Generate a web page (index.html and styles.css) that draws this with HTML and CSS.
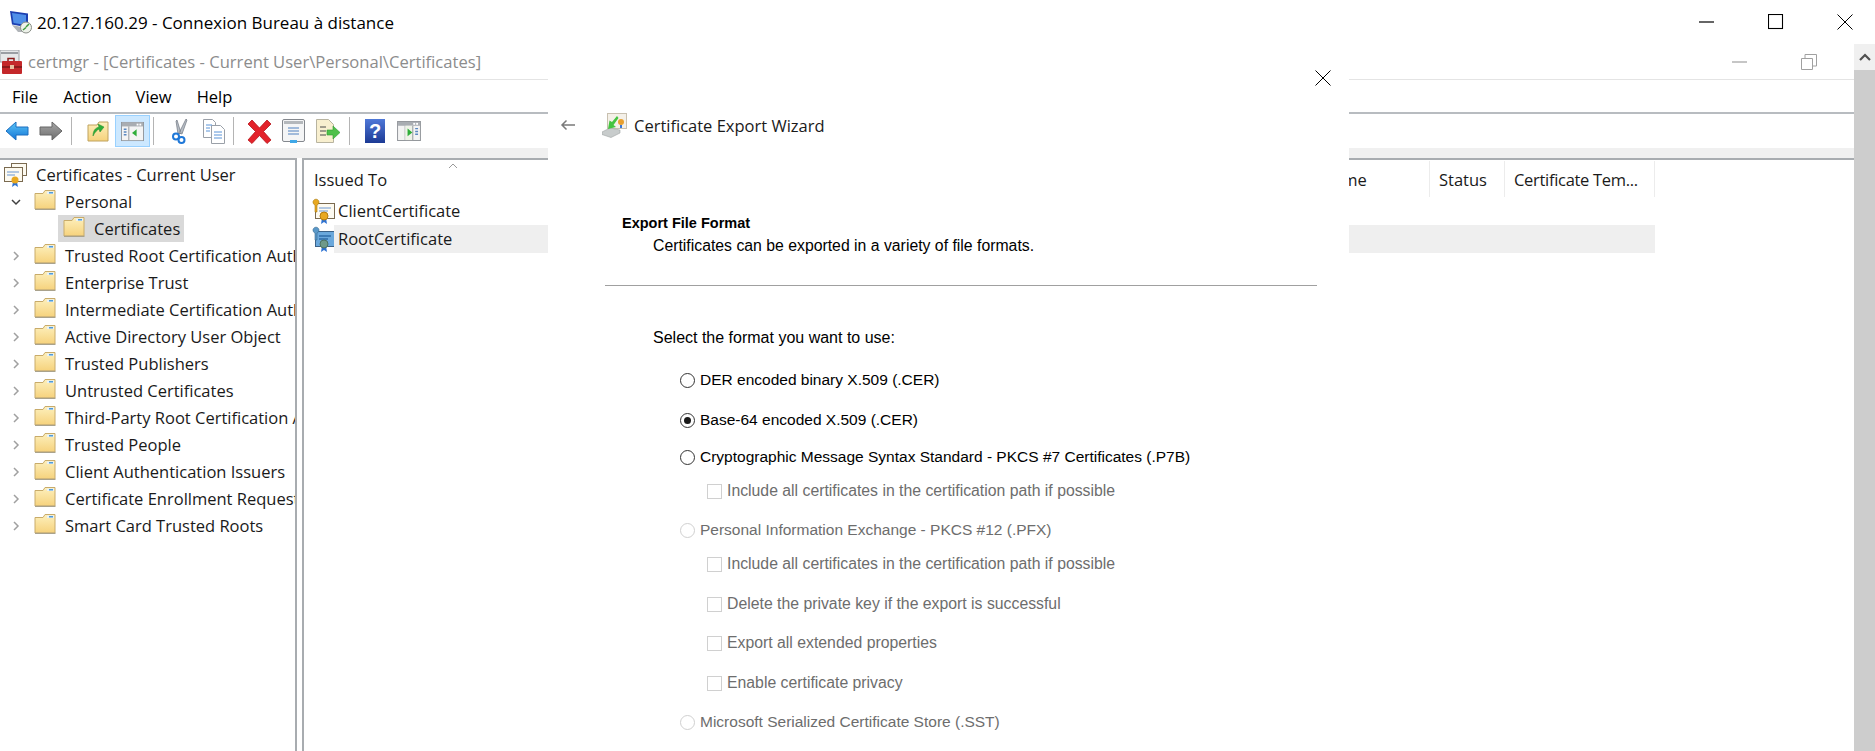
FILE: index.html
```html
<!DOCTYPE html>
<html lang="en">
<head>
    <meta charset="UTF-8">
    <meta name="viewport" content="width=device-width, initial-scale=1.0">
    <title>Connexion Bureau à distance</title>
    <link rel="stylesheet" href="styles.css">
</head>
<body>
    <!-- shared icons -->
    <svg class="defs" width="0" height="0">
        <defs>
            <linearGradient id="gFolder" x1="0" y1="0" x2="0" y2="1">
                <stop offset="0" stop-color="#fdf0bd"/>
                <stop offset="1" stop-color="#f6d27c"/>
            </linearGradient>
            <linearGradient id="gBlue" x1="0" y1="0" x2="0" y2="1">
                <stop offset="0" stop-color="#5cc6f7"/>
                <stop offset="1" stop-color="#1273d6"/>
            </linearGradient>
            <linearGradient id="gGray" x1="0" y1="0" x2="0" y2="1">
                <stop offset="0" stop-color="#a6a6a6"/>
                <stop offset="1" stop-color="#6e6e6e"/>
            </linearGradient>
            <linearGradient id="gHelp" x1="0" y1="0" x2="0" y2="1">
                <stop offset="0" stop-color="#4f78d8"/>
                <stop offset="1" stop-color="#1c3a94"/>
            </linearGradient>
        </defs>
        <symbol id="folder" viewBox="0 0 22 21">
            <path d="M1 4.500h8l2-3h10v18.500H1z" fill="url(#gFolder)" stroke="#c8ab6a"/>
            <path d="M1 20.500h20.500" stroke="#a9a28c" stroke-width="1.500"/>
            <path d="M13 2.500h7v2.500h-7z" fill="#e8f1f8"/>
            <path d="M15 3h4v1.500h-4z" fill="#4f9bd8"/>
        </symbol>
        <symbol id="pane" viewBox="0 0 25 21">
            <rect x=".5" y=".5" width="24" height="20" fill="#f4f4f4" stroke="#8f9398"/>
            <rect x="1" y="1" width="23" height="4" fill="#a9adb2"/>
            <rect x="17" y="2" width="2" height="2" fill="#fff"/>
            <rect x="20" y="2" width="2" height="2" fill="#fff"/>
            <path d="M8.500 5v15" stroke="#8f9398"/>
        </symbol>
        <symbol id="cert" viewBox="0 0 24 27">
            <rect x="4.500" y="5.500" width="19" height="15" fill="#fdfaf0" stroke="#7a6a50"/>
            <path d="M8 10h12M8 13h9" stroke="#9bb8dc" stroke-width="1.500"/>
            <path d="M11 20l-1 6 3-2 3 2-1-6z" fill="#2d72d2"/>
            <circle cx="13" cy="18" r="4" fill="#e8a820" stroke="#b57d10"/>
        </symbol>
        <symbol id="chev-right" viewBox="0 0 10 10">
            <path d="M3 1l4 4-4 4" fill="none" stroke="#a0a0a0" stroke-width="1.500"/>
        </symbol>
    </svg>

    <header class="rdp-bar">
        <svg class="rdp-icon" viewBox="0 0 24 24" width="24" height="24">
            <path d="M1 1l18 2.500v14L3 14.500z" fill="#1c3fb0"/>
            <path d="M3 3l14 2v10L4.500 13z" fill="#4f8fe8"/>
            <path d="M3 15l6 7h5l1-4.500z" fill="#b0b4b8"/>
            <circle cx="17" cy="17.500" r="5.500" fill="#eef2ea" stroke="#8a8f88"/>
            <path d="M14 20l3-2.500M17 17l3-3" stroke="#3c9a3c" stroke-width="1.500"/>
        </svg>
        <span class="rdp-title">20.127.160.29 - Connexion Bureau à distance</span>
        <div class="win-controls">
            <svg width="16" height="16" viewBox="0 0 16 16"><path d="M0 8h15" stroke="#000" stroke-width="1.200"/></svg>
            <svg width="16" height="16" viewBox="0 0 16 16"><rect x=".5" y=".5" width="14" height="14" fill="none" stroke="#000" stroke-width="1.100"/></svg>
            <svg width="16" height="16" viewBox="0 0 16 16"><path d="M.5.5l15 15M15.500.5l-15 15" stroke="#000"/></svg>
        </div>
    </header>

    <div class="desktop">
        <div class="mmc">
            <div class="mmc-title">
                <svg class="mmc-icon" viewBox="0 0 24 24" width="24" height="24">
                    <rect x="0" y="0" width="19" height="12" fill="#e6e8ea" stroke="#9a9ea4"/>
                    <path d="M1 3h17" stroke="#9a9ea4" stroke-width="2"/>
                    <path d="M8 11V8.500h6V11" fill="none" stroke="#8a1c1c" stroke-width="1.500"/>
                    <rect x="2" y="11" width="20" height="13" rx="1" fill="#c4282a"/>
                    <rect x="2" y="16" width="20" height="2" fill="#8a1c1c"/>
                    <rect x="10" y="15" width="4" height="4" fill="#e8c0a0"/>
                </svg>
                <span class="mmc-name">certmgr - [Certificates - Current User\Personal\Certificates]</span>
                <div class="mmc-controls">
                    <svg width="16" height="16" viewBox="0 0 16 16"><path d="M0 8h15" stroke="#a0a0a0" stroke-width="1.200"/></svg>
                    <svg width="16" height="16" viewBox="0 0 16 16"><path d="M.5 4.500h11v11H.5z" fill="none" stroke="#a0a0a0"/><path d="M4 4V.5h11.500V12H12" fill="none" stroke="#a0a0a0"/></svg>
                </div>
            </div>

            <nav class="menu">
                <span class="menu-file">File</span>
                <span class="menu-action">Action</span>
                <span class="menu-view">View</span>
                <span>Help</span>
            </nav>

            <div class="toolbar">
                <span class="tool w34"><svg width="24" height="20" viewBox="0 0 24 20"><path d="M1 10L11 1v5h12v8H11v5z" fill="url(#gBlue)" stroke="#1c6fc0"/></svg></span>
                <span class="tool w34"><svg width="24" height="20" viewBox="0 0 24 20"><path d="M23 10L13 1v5H1v8h12v5z" fill="url(#gGray)" stroke="#666"/></svg></span>
                <span class="sep"></span>
                <span class="tool w35"><svg width="22" height="22" viewBox="0 0 22 22"><path d="M1 5h9l2-3h9v19H1z" fill="url(#gFolder)" stroke="#bfa25f"/><path d="M6 16c0-5 2-8 6-9l-1-3 6 3-4 5-1-3c-2 1-4 3-6 7z" fill="#2fae3a" stroke="#1c8a28" stroke-width=".5"/></svg></span>
                <span class="tool w35 is-active"><svg width="23" height="21" viewBox="0 0 25 21"><use href="#pane"/><path d="M3 8h3M3 11h3M3 14h3" stroke="#5a88c0" stroke-width="1.500"/><path d="M17 8v8l-5-4z" fill="#2fae3a"/></svg></span>
                <span class="sep"></span>
                <span class="tool w35"><svg width="18" height="26" viewBox="0 0 18 26"><path d="M8 15L15 1l1 1-5 14zM10 15L6 2 5 3l2 13z" fill="#b8bec6" stroke="#6f7680" stroke-width=".7"/><circle cx="5" cy="18.500" r="3" fill="none" stroke="#1f78d8" stroke-width="2"/><circle cx="10.500" cy="22" r="3" fill="none" stroke="#1f78d8" stroke-width="2"/></svg></span>
                <span class="tool w33"><svg width="24" height="25" viewBox="0 0 24 25"><path d="M1.500.5h9l3 3v15h-12z" fill="#fff" stroke="#9aa0a8"/><path d="M9.500 6.500h9l4 4v14h-13z" fill="#fff" stroke="#9aa0a8"/><path d="M4 6h6M4 9h4M4 12h4M12 13h8M12 16h8M12 19h8" stroke="#5a94d8"/></svg></span>
                <span class="sep"></span>
                <span class="tool w34"><svg width="25" height="25" viewBox="0 0 25 25"><path d="M5 1l7.500 8L20 1l4 4-7.500 7.500L24 21l-4 3.500-7.500-8-7.500 8L1 21l7.500-8.500L1 5z" fill="#e3222a" stroke="#b6151c" stroke-width=".8"/></svg></span>
                <span class="tool w34"><svg width="23" height="24" viewBox="0 0 23 24"><rect x=".5" y=".5" width="22" height="22" rx="1.500" fill="#f4f5f6" stroke="#84888e"/><rect x="2" y="2" width="19" height="3" fill="#b4b8bc"/><path d="M6 9h11M6 12h11M6 15h11" stroke="#4f80c0"/><rect x="8" y="21" width="7" height="3" fill="#3fa8e8"/></svg></span>
                <span class="tool w36"><svg width="25" height="25" viewBox="0 0 25 25"><path d="M.5.5h12l5 5v18H.5z" fill="#f8efcf" stroke="#b8b4a0"/><path d="M4 8h6M4 12h6M4 16h6" stroke="#4a4a4a"/><path d="M11 11h6V7l7 6.500-7 6.500v-4h-6z" fill="#4fc04a" stroke="#2e9a30" stroke-width=".6"/></svg></span>
                <span class="sep"></span>
                <span class="tool w33"><svg width="20" height="24" viewBox="0 0 20 24"><rect width="20" height="24" fill="url(#gHelp)"/><text class="help-mark" x="10" y="19" text-anchor="middle">?</text></svg></span>
                <span class="tool w36"><svg width="24" height="20" viewBox="0 0 25 21"><use href="#pane"/><path d="M8.500 5h8v15h-8z" fill="#eef3e8"/><path d="M16.500 5v15" stroke="#8f9398"/><path d="M19 8h3M19 11h3M19 14h3" stroke="#5a88c0" stroke-width="1.500"/><path d="M11 8v8l5-4z" fill="#2fae3a"/></svg></span>
            </div>

            <div class="status-strip"></div>

            <div class="panes">
                <aside class="tree">
                    <div class="tree-row tree-root">
                        <svg class="tree-root-icon" width="24" height="24" viewBox="0 0 24 24"><rect x="7.500" y=".5" width="15" height="12" fill="#fdfaf0" stroke="#7a6a50"/><rect x=".5" y="4.500" width="18" height="14" fill="#fdfaf0" stroke="#7a6a50"/><path d="M3 9h12M3 12h8" stroke="#9bb8dc" stroke-width="1.500"/><path d="M9 19l-1 5 3-2 3 2-1-5z" fill="#2d72d2"/><circle cx="11" cy="17" r="3.500" fill="#e8a820"/></svg>
                        <span>Certificates - Current User</span>
                    </div>
                    <div class="tree-row">
                        <svg class="chev" width="10" height="10" viewBox="0 0 10 10"><path d="M1 3l4 4 4-4" fill="none" stroke="#404040" stroke-width="1.500"/></svg>
                        <svg class="folder" width="22" height="21"><use href="#folder"/></svg>
                        <span>Personal</span>
                    </div>
                    <div class="tree-row tree-child">
                        <div class="tree-selected">
                            <svg class="folder" width="22" height="21"><use href="#folder"/></svg>
                            <span>Certificates</span>
                        </div>
                    </div>
                    <div class="tree-row"><svg class="chev" width="10" height="10"><use href="#chev-right"/></svg><svg class="folder" width="22" height="21"><use href="#folder"/></svg><span>Trusted Root Certification Authorities</span></div>
                    <div class="tree-row"><svg class="chev" width="10" height="10"><use href="#chev-right"/></svg><svg class="folder" width="22" height="21"><use href="#folder"/></svg><span>Enterprise Trust</span></div>
                    <div class="tree-row"><svg class="chev" width="10" height="10"><use href="#chev-right"/></svg><svg class="folder" width="22" height="21"><use href="#folder"/></svg><span>Intermediate Certification Authorities</span></div>
                    <div class="tree-row"><svg class="chev" width="10" height="10"><use href="#chev-right"/></svg><svg class="folder" width="22" height="21"><use href="#folder"/></svg><span>Active Directory User Object</span></div>
                    <div class="tree-row"><svg class="chev" width="10" height="10"><use href="#chev-right"/></svg><svg class="folder" width="22" height="21"><use href="#folder"/></svg><span>Trusted Publishers</span></div>
                    <div class="tree-row"><svg class="chev" width="10" height="10"><use href="#chev-right"/></svg><svg class="folder" width="22" height="21"><use href="#folder"/></svg><span>Untrusted Certificates</span></div>
                    <div class="tree-row"><svg class="chev" width="10" height="10"><use href="#chev-right"/></svg><svg class="folder" width="22" height="21"><use href="#folder"/></svg><span>Third-Party Root Certification Authorities</span></div>
                    <div class="tree-row"><svg class="chev" width="10" height="10"><use href="#chev-right"/></svg><svg class="folder" width="22" height="21"><use href="#folder"/></svg><span>Trusted People</span></div>
                    <div class="tree-row"><svg class="chev" width="10" height="10"><use href="#chev-right"/></svg><svg class="folder" width="22" height="21"><use href="#folder"/></svg><span>Client Authentication Issuers</span></div>
                    <div class="tree-row"><svg class="chev" width="10" height="10"><use href="#chev-right"/></svg><svg class="folder" width="22" height="21"><use href="#folder"/></svg><span>Certificate Enrollment Requests</span></div>
                    <div class="tree-row"><svg class="chev" width="10" height="10"><use href="#chev-right"/></svg><svg class="folder" width="22" height="21"><use href="#folder"/></svg><span>Smart Card Trusted Roots</span></div>
                </aside>

                <section class="list">
                    <div class="list-head">
                        <div class="col col-issued">Issued To
                            <svg class="sort-caret" width="10" height="6" viewBox="0 0 10 6"><path d="M1 5l4-4 4 4" fill="none" stroke="#9a9a9a"/></svg>
                        </div>
                        <div class="col col-hidden"></div>
                        <div class="col col-name">Friendly Name</div>
                        <div class="col col-status">Status</div>
                        <div class="col col-template">Certificate Tem...</div>
                    </div>
                    <div class="list-row">
                        <svg class="cert-icon" width="24" height="27"><use href="#cert"/><path d="M4 7a3 3 0 1 1 2 0v7H4z" fill="#e8a820" stroke="#a87a10" stroke-width=".6"/></svg>
                        <span>ClientCertificate</span>
                    </div>
                    <div class="list-row">
                        <svg class="cert-icon" width="24" height="27" viewBox="0 0 24 27"><rect x="4.500" y="5.500" width="19" height="15" fill="#6aa8dc" stroke="#3c6288"/><path d="M8 10h12M8 13h9" stroke="#2f6ca8" stroke-width="1.500"/><path d="M11 20l-1 6 3-2 3 2-1-6z" fill="#2d72d2"/><circle cx="13" cy="18" r="4" fill="#6e9a8a" stroke="#4c7262"/><path d="M4 7a3 3 0 1 1 2 0v7H4z" fill="#5a98c8" stroke="#386a90" stroke-width=".6"/></svg>
                        <span class="list-selected">RootCertificate</span>
                    </div>
                </section>
            </div>
        </div>

        <div class="scrollbar">
            <div class="scroll-btn"><svg width="12" height="8" viewBox="0 0 12 8"><path d="M1 7l5-5 5 5" fill="none" stroke="#505050" stroke-width="2.200"/></svg></div>
            <div class="scroll-thumb"></div>
        </div>

        <!-- wizard dialog sits on top of the console -->
        <div class="wizard">
            <svg class="wizard-close" width="16" height="16" viewBox="0 0 16 16"><path d="M.5.5l15 15M15.500.5l-15 15" stroke="#000"/></svg>
            <div class="wizard-head">
                <svg class="wizard-back" width="16" height="12" viewBox="0 0 16 12"><path d="M15 6H2M6.500 1.500L2 6l4.500 4.500" fill="none" stroke="#7a7a7a" stroke-width="1.500"/></svg>
                <svg class="wizard-icon" width="25" height="25" viewBox="0 0 25 25"><rect x="5.500" y=".5" width="19" height="15" fill="#f4f0e8" stroke="#c8c0b0"/><circle cx="19" cy="9" r="3" fill="#e8a030"/><path d="M18 12h2v3h-2z" fill="#3a78d8"/><path d="M0 19l8-4 10 2v3l-9 4.500-9-3z" fill="#c8cccc" stroke="#a0a4a4" stroke-width=".6"/><path d="M15 3l-5 6-2.500-1.500L6 16l8-2-2.500-2 5-7z" fill="#44c440"/></svg>
                <span class="wizard-title">Certificate Export Wizard</span>
            </div>
            <h3 class="wizard-h">Export File Format</h3>
            <p class="wizard-desc">Certificates can be exported in a variety of file formats.</p>
            <hr class="wizard-line">
            <p class="wizard-prompt">Select the format you want to use:</p>
            <div class="options">
                <div class="opt"><span class="radio"></span>DER encoded binary X.509 (.CER)</div>
                <div class="opt"><span class="radio is-on"></span>Base-64 encoded X.509 (.CER)</div>
                <div class="opt"><span class="radio"></span>Cryptographic Message Syntax Standard - PKCS #7 Certificates (.P7B)</div>
                <div class="opt sub off"><span class="check"></span>Include all certificates in the certification path if possible</div>
                <div class="opt off"><span class="radio"></span>Personal Information Exchange - PKCS #12 (.PFX)</div>
                <div class="opt sub off"><span class="check"></span>Include all certificates in the certification path if possible</div>
                <div class="opt sub off"><span class="check"></span>Delete the private key if the export is successful</div>
                <div class="opt sub off"><span class="check"></span>Export all extended properties</div>
                <div class="opt sub off"><span class="check"></span>Enable certificate privacy</div>
                <div class="opt off"><span class="radio"></span>Microsoft Serialized Certificate Store (.SST)</div>
            </div>
        </div>
    </div>
</body>
</html>
```

FILE: styles.css
```css
* {
    box-sizing: border-box;
}
html, body {
    margin: 0;
    height: 751px;
    overflow: hidden;
    background-color: #fff;
}
body {
    font-family: "Open Sans", "Noto Sans", sans-serif;
    font-size: 16.500px;
    color: #1a1a1a;
}
.defs {
    display: block;
    height: 0;
}
svg {
    display: block;
    flex: none;
}

/* remote desktop title bar */
.rdp-bar {
    display: flex;
    align-items: center;
    height: 44px;
    padding-left: 9px;
    color: #000;
}
.rdp-icon {
    margin-right: 4px;
}
.rdp-title {
    font-size: 17px;
    white-space: nowrap;
}
.win-controls {
    display: flex;
    gap: 53px;
    margin-left: auto;
    margin-right: 22px;
}

.desktop {
    position: relative;
    display: flex;
    height: 707px;
}
.mmc {
    flex: 1;
    display: flex;
    flex-direction: column;
    min-width: 0;
}

.mmc-title {
    display: flex;
    align-items: center;
    height: 36px;
    border-bottom: 1px solid #e4e4e4;
}
.mmc-icon {
    margin-right: 4px;
}
.mmc-name {
    font-size: 16.600px;
    color: #8c8c8c;
    white-space: nowrap;
}
.mmc-controls {
    display: flex;
    gap: 53px;
    margin-left: auto;
    margin-right: 37px;
}

.menu {
    display: flex;
    align-items: center;
    height: 34px;
    padding-left: 12px;
    border-bottom: 2px solid #b8bcc0;
    color: #000;
}
.menu-file {
    margin-right: 25px;
}
.menu-action {
    margin-right: 24px;
}
.menu-view {
    margin-right: 25px;
}

.toolbar {
    display: flex;
    align-items: center;
    height: 34px;
}
.tool {
    display: flex;
    align-items: center;
    justify-content: center;
    height: 32px;
}
.w33 { width: 33px; }
.w34 { width: 34px; }
.w35 { width: 35px; }
.w36 { width: 36px; }
.tool.is-active {
    background-color: #cce8ff;
    border: 1px solid #99d1ff;
}
.sep {
    width: 1px;
    height: 28px;
    margin: 0 8px 0 3px;
    background-color: #b4b4b4;
}
.help-mark {
    font-family: "Liberation Sans", sans-serif;
    font-weight: bold;
    font-size: 20px;
    fill: #fff;
}

.status-strip {
    height: 10px;
    background-color: #f0f0f0;
}

.panes {
    flex: 1;
    display: flex;
    gap: 5px;
    min-height: 0;
}
.tree {
    width: 297px;
    padding-top: 1px;
    border-top: 2px solid #a8acb0;
    border-right: 2px solid #a8acb0;
    overflow: hidden;
}
.tree-row {
    display: flex;
    align-items: center;
    height: 27px;
    padding-left: 11px;
    white-space: nowrap;
}
.tree-row > span,
.tree-selected > span {
    margin-left: 9px;
}
.tree-root {
    padding-left: 4px;
}
.tree-root > span {
    margin-left: 8px;
}
.chev {
    margin-right: 13px;
}
.folder {
    margin-bottom: 4px;
}
.tree-child {
    padding-left: 58px;
}
.tree-selected {
    display: flex;
    align-items: center;
    width: 126px;
    height: 27px;
    padding-left: 5px;
    background-color: #d9d9d9;
}

.list {
    flex: 1;
    border-top: 2px solid #a8acb0;
    border-left: 2px solid #a8acb0;
    min-width: 0;
}
.list-head {
    display: flex;
    height: 36px;
    margin-top: 1px;
}
.col {
    position: relative;
    display: flex;
    align-items: center;
    padding-left: 9px;
    border-right: 1px solid #ececec;
    white-space: nowrap;
}
.col-issued {
    width: 340px;
    padding-left: 10px;
}
.col-hidden {
    width: 606px;
}
.col-name {
    width: 180px;
    padding-left: 5px;
}
.col-status {
    width: 75px;
}
.col-template {
    width: 150px;
    letter-spacing: -0.3px;
}
.sort-caret {
    position: absolute;
    top: 2px;
    left: 144px;
}
.list-row {
    display: flex;
    align-items: center;
    height: 28px;
    padding-left: 7px;
    white-space: nowrap;
}
.list-row span {
    padding-bottom: 2px;
}
.cert-icon {
    margin-right: 3px;
}
.list-selected {
    display: flex;
    align-items: center;
    width: 1321px;
    height: 28px;
    margin-left: -4px;
    padding-left: 4px;
    background-color: #efefef;
}

.scrollbar {
    width: 21px;
    display: flex;
    flex-direction: column;
}
.scroll-btn {
    display: flex;
    align-items: center;
    justify-content: center;
    height: 26px;
    background-color: #f0f0f0;
}
.scroll-thumb {
    flex: 1;
    background-color: #cdcdcd;
}

/* wizard */
.wizard {
    position: absolute;
    top: 22px;
    left: 548px;
    width: 801px;
    bottom: 0;
    background-color: #fff;
    font-family: "Liberation Sans", sans-serif;
    font-size: 15.800px;
    color: #000;
    overflow: hidden;
}
.wizard-close {
    position: absolute;
    top: 4px;
    right: 18px;
}
.wizard-head {
    display: flex;
    align-items: center;
    height: 26px;
    margin-top: 46px;
    padding-left: 12px;
}
.wizard-back {
    margin-right: 26px;
}
.wizard-icon {
    margin-right: 7px;
}
.wizard-title {
    font-family: "Open Sans", sans-serif;
    font-size: 16.500px;
    color: #1a1a1a;
}
.wizard-h {
    margin: 0;
    padding-top: 75px;
    padding-left: 74px;
    font-size: 14.500px;
    line-height: 20px;
}
.wizard-desc {
    margin: 3px 0 0 105px;
    line-height: 20px;
}
.wizard-line {
    margin: 29px 32px 0 57px;
    border: 0;
    height: 1px;
    background-color: #a0a0a0;
}
.wizard-prompt {
    margin: 42px 0 0 105px;
    font-size: 16px;
    line-height: 20px;
}
.options {
    display: grid;
    grid-template-rows: 40px 37px 34px 39px 34px 40px 39px 40px 39px 20px;
    margin-top: 22px;
    padding-left: 132px;
    font-size: 15.500px;
}
.opt {
    display: flex;
    align-items: flex-start;
    line-height: 20px;
    white-space: nowrap;
}
.opt.off {
    color: #6d6d6d;
}
.opt.sub {
    padding-left: 27px;
    font-size: 15.800px;
}
.radio {
    flex: none;
    position: relative;
    width: 15px;
    height: 15px;
    margin: 3px 5px 0 0;
    border: 1px solid #333;
    border-radius: 50%;
    background-color: #fff;
}
.off .radio {
    border-color: #d0d0d0;
}
.radio.is-on::after {
    content: "";
    position: absolute;
    top: 3px;
    left: 3px;
    width: 7px;
    height: 7px;
    border-radius: 50%;
    background-color: #1a1a1a;
}
.check {
    flex: none;
    width: 15px;
    height: 15px;
    margin: 3px 5px 0 0;
    border: 1px solid #d0d0d0;
    background-color: #fff;
}
```
